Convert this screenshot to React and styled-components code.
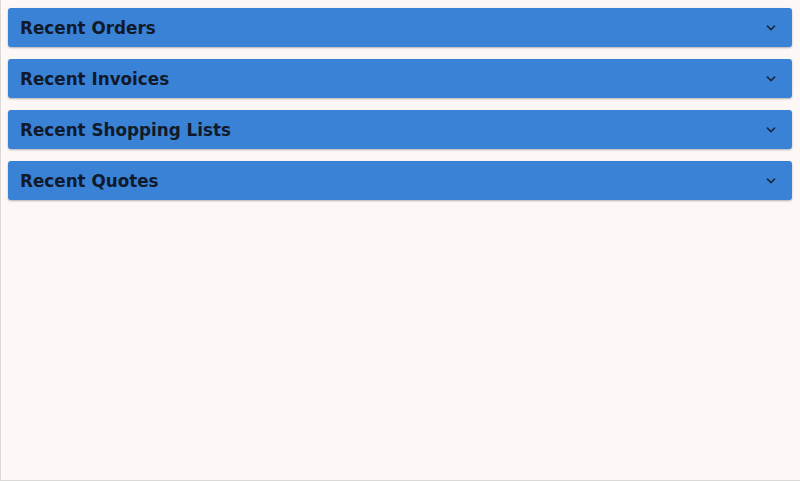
import React from 'react';
import styled, { createGlobalStyle } from 'styled-components';

const GlobalStyle = createGlobalStyle`
  html, body {
    margin: 0;
    padding: 0;
    background: #fdf7f5;
  }
  * {
    box-sizing: border-box;
  }
`;

const Page = styled.div`
  height: 481px;
  padding: 8px 8px 8px 7px;
  border-left: 1px solid #dcd8d7;
  border-bottom: 1px solid #dcd8d7;
  background: #fdf7f5;
  font-family: "DejaVu Sans", "Liberation Sans", sans-serif;
`;

const List = styled.div`
  display: flex;
  flex-direction: column;
  gap: 12px;
`;

const Header = styled.button`
  display: flex;
  align-items: center;
  justify-content: space-between;
  width: 100%;
  height: 39px;
  padding: 1px 16px 0 12px;
  border: none;
  border-radius: 3px;
  background: #3a82d5;
  box-shadow: 0 1px 2px rgba(40, 50, 70, 0.35);
  color: #111a2b;
  font-family: inherit;
  font-size: 16.8px;
  font-weight: 700;
  text-align: left;
  cursor: pointer;
`;

const Chevron = () => (
  <svg width="10" height="6" viewBox="0 0 10 6" fill="none">
    <path d="M1.5 1.2 L5 4.6 L8.5 1.2" stroke="#1d2a44" strokeWidth="1.7" strokeLinecap="round" strokeLinejoin="round" />
  </svg>
);

const sections = ['Recent Orders', 'Recent Invoices', 'Recent Shopping Lists', 'Recent Quotes'];

export default function App() {
  return (
    <Page>
      <GlobalStyle />
      <List>
        {sections.map(title => (
          <Header key={title} type="button">
            <span>{title}</span>
            <Chevron />
          </Header>
        ))}
      </List>
    </Page>
  );
}
